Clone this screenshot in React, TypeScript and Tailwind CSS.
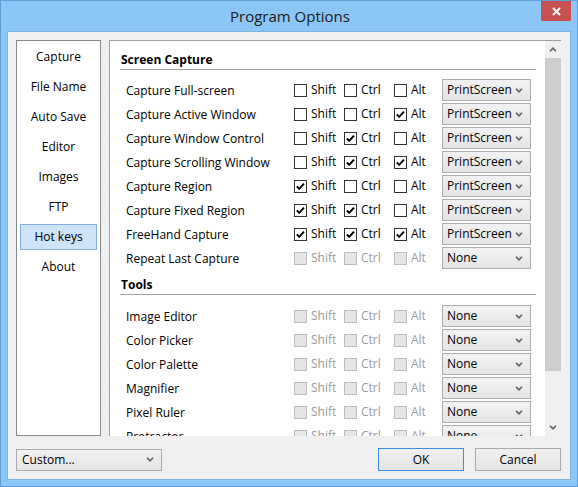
import React from "react";

type Row = {
  label: string;
  shift?: boolean;
  ctrl?: boolean;
  alt?: boolean;
  keyName: string;
  disabled?: boolean;
};

const screenRows: Row[] = [
  { label: "Capture Full-screen", keyName: "PrintScreen" },
  { label: "Capture Active Window", alt: true, keyName: "PrintScreen" },
  { label: "Capture Window Control", ctrl: true, keyName: "PrintScreen" },
  { label: "Capture Scrolling Window", ctrl: true, alt: true, keyName: "PrintScreen" },
  { label: "Capture Region", shift: true, keyName: "PrintScreen" },
  { label: "Capture Fixed Region", shift: true, ctrl: true, keyName: "PrintScreen" },
  { label: "FreeHand Capture", shift: true, ctrl: true, alt: true, keyName: "PrintScreen" },
  { label: "Repeat Last Capture", keyName: "None", disabled: true },
];

const toolRows: Row[] = [
  { label: "Image Editor", keyName: "None", disabled: true },
  { label: "Color Picker", keyName: "None", disabled: true },
  { label: "Color Palette", keyName: "None", disabled: true },
  { label: "Magnifier", keyName: "None", disabled: true },
  { label: "Pixel Ruler", keyName: "None", disabled: true },
  { label: "Protractor", keyName: "None", disabled: true },
];

const menu = ["Capture", "File Name", "Auto Save", "Editor", "Images", "FTP", "Hot keys", "About"];

function Chevron({ up = false }: { up?: boolean }) {
  return (
    <svg width="8" height="5" viewBox="0 0 8 5" className="shrink-0">
      <path
        d={up ? "M1 4.2 L4 1.2 L7 4.2" : "M1 0.8 L4 3.8 L7 0.8"}
        fill="none"
        stroke="#606060"
        strokeWidth="1.6"
      />
    </svg>
  );
}

function Check({ checked, disabled, text }: { checked?: boolean; disabled?: boolean; text: string }) {
  return (
    <div className="flex items-center gap-[4px]">
      <div
        className={
          disabled
            ? "w-[13px] h-[13px] border border-[#bcbcbc] bg-[#e6e6e6] flex items-center justify-center"
            : "w-[13px] h-[13px] border border-[#333333] bg-white flex items-center justify-center"
        }
      >
        {checked && (
          <svg width="11" height="11" viewBox="0 0 11 11">
            <path d="M1.8 5.4 L4.2 7.9 L9 2.6" fill="none" stroke="#000" strokeWidth="1.9" />
          </svg>
        )}
      </div>
      <span className={disabled ? "text-[#9b9b9b]" : "text-black"}>{text}</span>
    </div>
  );
}

function Combo({ value, className = "" }: { value: string; className?: string }) {
  return (
    <div
      className={
        "h-[22px] flex items-center justify-between pl-[4px] pr-[7px] border border-[#acacac] bg-gradient-to-b from-[#f2f2f2] to-[#e5e5e5] text-black " +
        className
      }
    >
      <span>{value}</span>
      <Chevron />
    </div>
  );
}

function HotkeyRow({ row }: { row: Row }) {
  return (
    <div className="grid grid-cols-[168px_50px_50px_48px_89px] items-center h-[24px] ml-[16px]">
      <span className="text-black pt-[1px]">{row.label}</span>
      <Check checked={row.shift} disabled={row.disabled} text="Shift" />
      <Check checked={row.ctrl} disabled={row.disabled} text="Ctrl" />
      <Check checked={row.alt} disabled={row.disabled} text="Alt" />
      <Combo value={row.keyName} />
    </div>
  );
}

function SectionHeader({ title, className = "" }: { title: string; className?: string }) {
  return (
    <div className={"ml-[10px] mr-[9px] h-[19px] border-b border-[#a0a0a0] " + className}>
      <span className="pl-[1px] font-bold leading-[18px] text-black">{title}</span>
    </div>
  );
}

export default function App() {
  return (
    <div className="w-[578px] h-[487px] bg-[#8bc6f7] border border-[#5f9ed6] flex flex-col font-['Segoe_UI','Open_Sans',sans-serif] text-[12px]">
      {/* title bar */}
      <div className="grid grid-cols-[1fr_auto_1fr] h-[30px] items-start">
        <div />
        <div className="text-[15px] leading-[30px] text-[#1b1b1b] pl-[2px]">Program Options</div>
        <div className="flex justify-end pr-[6px]">
          <div className="w-[30px] h-[20px] bg-[#c75050] flex items-center justify-center">
            <svg width="9" height="9" viewBox="0 0 9 9">
              <path d="M1 1 L8 8 M8 1 L1 8" stroke="#fff" strokeWidth="2" />
            </svg>
          </div>
        </div>
      </div>

      {/* client */}
      <div className="mx-[6px] mb-[6px] flex-1 bg-[#f0f0f0] border border-[#7fb3e0] flex flex-col pl-[8px] pr-[8px] pt-[8px]">
        <div className="flex gap-[8px] h-[396px]">
          {/* sidebar */}
          <div className="w-[85px] border border-[#828790] bg-white flex flex-col gap-[4px] pt-[3px]">
            {menu.map((m) => (
              <div
                key={m}
                className={
                  m === "Hot keys"
                    ? "mx-[3px] h-[26px] flex items-center justify-center bg-[#cde3f8] border border-[#84acdd] text-black"
                    : "mx-[3px] h-[26px] flex items-center justify-center border border-transparent text-black"
                }
              >
                {m}
              </div>
            ))}
          </div>

          {/* main panel */}
          <div className="w-[452px] border-t border-l border-[#a0a0a0] bg-white flex overflow-hidden">
            <div className="flex-1 overflow-hidden pt-[10px]">
              <SectionHeader title="Screen Capture" />
              <div className="mt-[8px]">
                {screenRows.map((r) => (
                  <HotkeyRow key={r.label} row={r} />
                ))}
              </div>
              <SectionHeader title="Tools" className="mt-[6px]" />
              <div className="mt-[9px]">
                {toolRows.map((r) => (
                  <HotkeyRow key={r.label} row={r} />
                ))}
              </div>
            </div>
            {/* scrollbar */}
            <div className="w-[16px] bg-[#f0f0f0] flex flex-col">
              <div className="h-[17px] flex items-center justify-center">
                <Chevron up />
              </div>
              <div className="h-[313px] bg-[#cdcdcd]" />
              <div className="flex-1" />
              <div className="h-[17px] flex items-center justify-center">
                <Chevron />
              </div>
            </div>
          </div>
        </div>

        {/* bottom row */}
        <div className="flex items-center mt-[12px] pr-[1px]">
          <Combo value="Custom..." className="w-[146px] pl-[5px]" />
          <div className="flex-1" />
          <div className="w-[86px] h-[23px] flex items-center justify-center border border-[#3c8ee0] bg-gradient-to-b from-[#f0f0f0] to-[#e5e5e5] text-black">
            OK
          </div>
          <div className="w-[86px] h-[23px] ml-[11px] flex items-center justify-center border border-[#acacac] bg-gradient-to-b from-[#f0f0f0] to-[#e5e5e5] text-black">
            Cancel
          </div>
        </div>
      </div>
    </div>
  );
}
